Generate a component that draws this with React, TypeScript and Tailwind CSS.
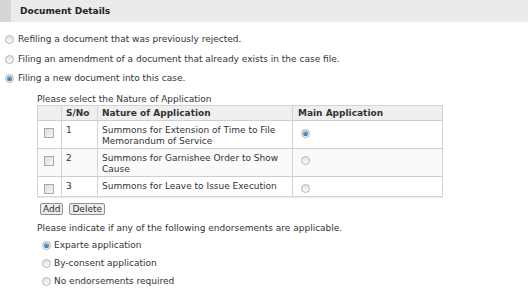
import { useState } from 'react'

const font = "font-['DejaVu_Sans',Verdana,sans-serif]"

function Radio({ checked, onClick }: { checked?: boolean; onClick?: () => void }) {
  return (
    <span
      onClick={onClick}
      className="inline-flex shrink-0 items-center justify-center w-[9px] h-[9px] rounded-full border border-[#b5b5b5] bg-gradient-to-b from-[#e4e4e4] to-[#fafafa]"
    >
      {checked && <span className="w-[5px] h-[5px] rounded-full bg-gradient-to-b from-[#7fb6dd] to-[#1e6fa8]" />}
    </span>
  )
}

function Checkbox() {
  return <span className="block w-[10px] h-[10px] border border-[#a9a9a9] bg-gradient-to-br from-[#dcdcdc] to-[#f6f6f6]" />
}

const rows = [
  { no: '1', text: ['Summons for Extension of Time to File', 'Memorandum of Service'] },
  { no: '2', text: ['Summons for Garnishee Order to Show', 'Cause'] },
  { no: '3', text: ['Summons for Leave to Issue Execution'] },
]

export default function App() {
  const [filing, setFiling] = useState(2)
  const [main, setMain] = useState(0)
  const [endorse, setEndorse] = useState(0)

  const filingOptions = [
    'Refiling a document that was previously rejected.',
    'Filing an amendment of a document that already exists in the case file.',
    'Filing a new document into this case.',
  ]
  const endorseOptions = ['Exparte application', 'By-consent application', 'No endorsements required']

  return (
    <div className={`${font} w-[528px] h-[293px] bg-white text-[#333] text-[9px] leading-[11px] overflow-hidden`}>
      {/* Section header */}
      <div className="flex h-[22px] bg-[#ebebeb]">
        <div className="w-[11px] bg-[#d6d6d6]" />
        <div className="flex items-center pl-[9px] font-bold text-[#222]">Document Details</div>
      </div>

      <div className="flex flex-col gap-[8.5px] pt-[12px] pl-[5px]">
        {filingOptions.map((label, i) => (
          <label key={i} className="flex items-center gap-[4px] h-[11px]" onClick={() => setFiling(i)}>
            <Radio checked={filing === i} />
            <span>{label}</span>
          </label>
        ))}
      </div>

      <div className="pl-[37px] pt-[10px]">
        <p className="h-[11px]">Please select the Nature of Application</p>

        {/* Applications table */}
        <div className="w-[406px] border border-[#d4d4d4] shadow-[0_1px_0_#ececec]">
          <div className="flex h-[15px] bg-[#efefef] font-bold border-b border-[#cfcfcf]">
            <div className="w-[24px] border-r border-[#d4d4d4]" />
            <div className="w-[36px] border-r border-[#d4d4d4] flex items-center pl-[4px]">S/No</div>
            <div className="w-[195px] border-r border-[#d4d4d4] flex items-center pl-[4px]">Nature of Application</div>
            <div className="flex-1 flex items-center pl-[5px]">Main Application</div>
          </div>
          {rows.map((r, i) => (
            <div
              key={r.no}
              className={`flex ${i < rows.length - 1 ? 'border-b border-[#cfcfcf]' : ''} ${i === 1 ? 'bg-[#fafafa]' : 'bg-white'}`}
            >
              <div className="w-[24px] border-r border-[#d4d4d4] pt-[7px] pl-[6px]">
                <Checkbox />
              </div>
              <div className="w-[36px] border-r border-[#d4d4d4] pt-[4px] pl-[4px]">{r.no}</div>
              <div className="w-[195px] border-r border-[#d4d4d4] pt-[4px] pb-[1px] pl-[4px]">
                {r.text.map((t) => (
                  <div key={t}>{t}</div>
                ))}
              </div>
              <div className="flex-1 pt-[7px] pl-[8px]">
                <Radio checked={main === i} onClick={() => setMain(i)} />
              </div>
            </div>
          ))}
        </div>

        <div className="flex gap-[6px] mt-[6px] pl-[3px]">
          <button className="h-[12px] px-[2px] bg-[#ececec] border border-[#8f8f8f] rounded-[2px] leading-[10px]">Add</button>
          <button className="h-[12px] px-[2px] bg-[#ececec] border border-[#8f8f8f] rounded-[2px] leading-[10px]">Delete</button>
        </div>

        <p className="mt-[8px] h-[11px]">Please indicate if any of the following endorsements are applicable.</p>

        <div className="flex flex-col gap-[7px] pt-[6px] pl-[5px]">
          {endorseOptions.map((label, i) => (
            <label key={label} className="flex items-center gap-[3px] h-[11px]" onClick={() => setEndorse(i)}>
              <Radio checked={endorse === i} />
              <span>{label}</span>
            </label>
          ))}
        </div>
      </div>
    </div>
  )
}
